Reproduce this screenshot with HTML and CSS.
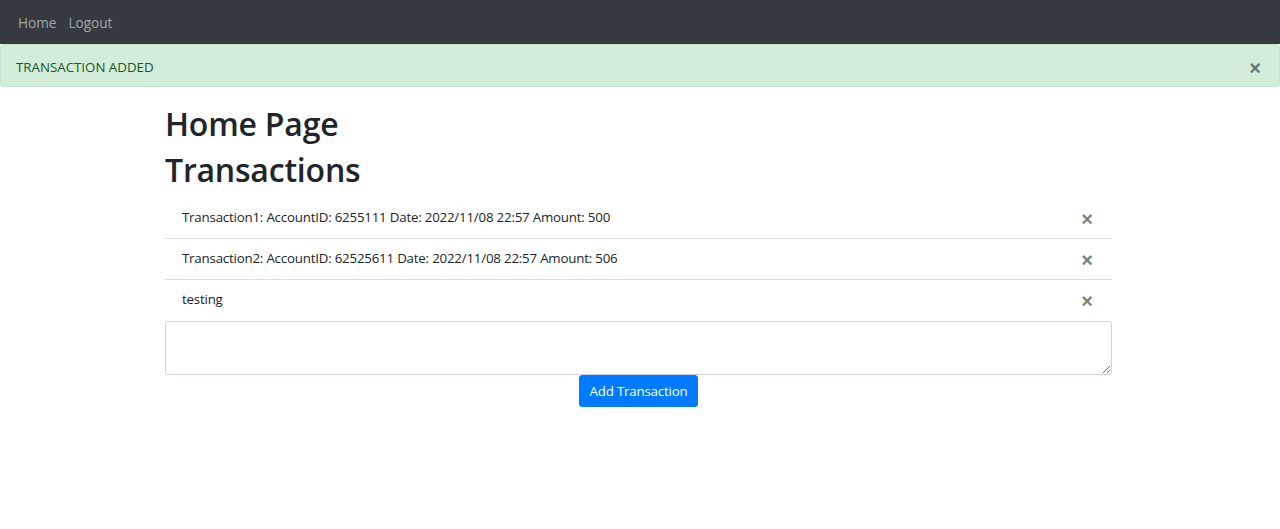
FILE: index.html
```html
<!DOCTYPE html>
<html lang="en">
<head>
<meta charset="utf-8">
<title>Home Page</title>
<link rel="stylesheet" href="styles.css">
</head>
<body>
<nav class="navbar">
  <a class="nav-link" href="#">Home</a>
  <a class="nav-link" href="#">Logout</a>
</nav>
<div class="alert">
  <span>TRANSACTION ADDED</span>
  <button class="close alert-close" type="button">&times;</button>
</div>
<main class="container">
  <h1 class="title">Home Page</h1>
  <h1 class="title">Transactions</h1>
  <ul class="list">
    <li class="item"><span>Transaction1: AccountID: 6255111 Date: 2022/11/08 22:57 Amount: 500</span><button class="close item-close" type="button">&times;</button></li>
    <li class="item"><span>Transaction2: AccountID: 62525611 Date: 2022/11/08 22:57 Amount: 506</span><button class="close item-close" type="button">&times;</button></li>
    <li class="item"><span>testing</span><button class="close item-close" type="button">&times;</button></li>
  </ul>
  <form class="add-form">
    <textarea class="field"></textarea>
    <button class="btn" type="button">Add Transaction</button>
  </form>
</main>
</body>
</html>
```

FILE: styles.css
```css
* { box-sizing: border-box; }
html, body { margin: 0; padding: 0; }
body {
  font-family: "Open Sans", "Noto Sans", "Liberation Sans", sans-serif;
  font-size: 13.3px;
  line-height: 1.5;
  letter-spacing: -0.2px;
  color: #212529;
  background: #fff;
}
.navbar {
  height: 44px;
  background: #343a40;
  display: flex;
  align-items: center;
  padding: 3px 7px 0;
}
.nav-link {
  color: rgba(255, 255, 255, 0.55);
  text-decoration: none;
  padding: 0 7px 0 11px;
  font-size: 13.6px;
  letter-spacing: 0;
}
.nav-link + .nav-link { padding-left: 5px; }
.alert {
  height: 43px;
  background: #d4edda;
  border: 1px solid #c3e6cb;
  border-radius: 3px;
  color: #155724;
  display: flex;
  align-items: center;
  justify-content: space-between;
  padding: 5px 17px 0 15px;
  margin-bottom: 18px;
  letter-spacing: 0;
}
.close {
  background: none;
  border: 0;
  padding: 0;
  font-family: "Liberation Sans", "DejaVu Sans", sans-serif;
  font-weight: 700;
  color: #000;
  opacity: 0.5;
  cursor: pointer;
  line-height: 1;
  letter-spacing: 0;
}
.alert-close { font-size: 20px; margin-top: -1px; margin-right: 1px; }
.container {
  width: 947px;
  margin-left: 165px;
}
.title {
  font-size: 32px;
  font-weight: 600;
  line-height: 1.2;
  margin: 0 0 8px;
  color: #212529;
  letter-spacing: -0.2px;
}
.list {
  list-style: none;
  margin: 0;
  padding: 0;
}
.item {
  display: flex;
  justify-content: space-between;
  align-items: center;
  padding: 10px 19px 10px 17px;
  border-bottom: 1px solid rgba(0, 0, 0, 0.125);
  height: 41px;
}
.item:last-child { border-bottom: 0; }
.item-close { font-size: 20px; margin-top: 2px; }
.add-form {
  display: flex;
  flex-direction: column;
  align-items: center;
}
.field {
  width: 100%;
  height: 54px;
  border: 1px solid #ced4da;
  border-radius: 3px;
  padding: 5px 10px;
  font: inherit;
  display: block;
  resize: vertical;
}
.btn {
  background: #007bff;
  border: 1px solid #007bff;
  color: #fff;
  font-family: inherit;
  font-size: 13.3px;
  letter-spacing: -0.2px;
  line-height: 20px;
  padding: 5px 10px;
  border-radius: 3px;
  white-space: nowrap;
  cursor: pointer;
}
```
